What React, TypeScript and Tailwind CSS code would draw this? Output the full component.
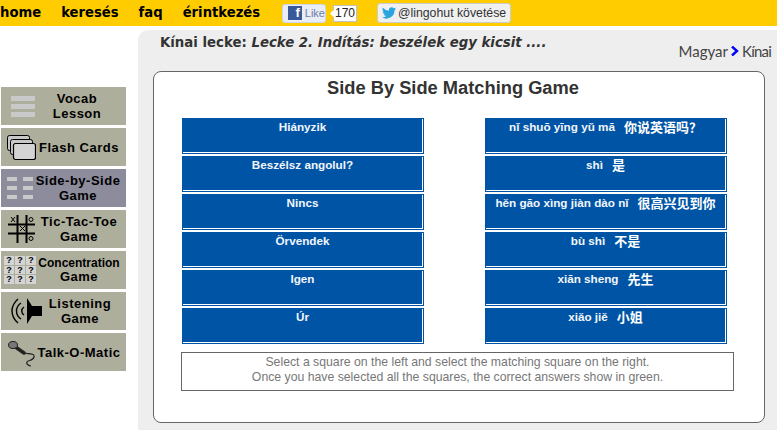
const navLinks = ["home", "keresés", "faq", "érintkezés"]

const leftTiles = ["Hiányzik", "Beszélsz angolul?", "Nincs", "Örvendek", "Igen", "Úr"]

const rightTiles = [
  { pinyin: "nǐ shuō yīng yǔ mā", han: "你说英语吗？" },
  { pinyin: "shì", han: "是" },
  { pinyin: "hěn gāo xìng jiàn dào nǐ", han: "很高兴见到你" },
  { pinyin: "bù shì", han: "不是" },
  { pinyin: "xiān sheng", han: "先生" },
  { pinyin: "xiǎo jiě", han: "小姐" },
]

function VocabIcon() {
  return (
    <div className="flex w-[24px] flex-col gap-[3px]">
      <div className="h-[5px] bg-[#c9c9c9]" />
      <div className="h-[5px] bg-[#c9c9c9]" />
      <div className="h-[5px] bg-[#c9c9c9]" />
    </div>
  )
}

function CardsIcon() {
  return (
    <svg width="30" height="27" viewBox="0 0 30 27">
      <rect x="1.5" y="1.5" width="22" height="15" rx="2" fill="#c8c8c8" stroke="#000" />
      <rect x="4.5" y="5.5" width="22" height="15" rx="2" fill="#c8c8c8" stroke="#000" />
      <rect x="7.5" y="9.5" width="22" height="16" rx="2" fill="#d4d4d4" stroke="#000" strokeWidth="1.2" />
    </svg>
  )
}

function SideBySideIcon() {
  return (
    <div className="grid grid-cols-2 gap-x-[6px] gap-y-[5px]">
      {[0, 1, 2, 3, 4, 5].map((i) => (
        <div key={i} className="h-[4px] w-[10px] bg-[#c9c9c9]" />
      ))}
    </div>
  )
}

function TicTacToeIcon() {
  return (
    <svg width="28" height="28" viewBox="0 0 28 28" stroke="#000" fill="none">
      <path d="M0 9.5H27M0 18.5H27M9.5 0V28M18.5 0V28" strokeWidth="2" />
      <path d="M3 2l4 5M7 2l-4 5M12 11l5 5M17 11l-5 5" strokeWidth="1" />
      <circle cx="23" cy="4.5" r="2" strokeWidth="1" />
      <circle cx="23" cy="23.5" r="2" strokeWidth="1" />
    </svg>
  )
}

function ConcentrationIcon() {
  return (
    <div className="grid grid-cols-3 gap-[1px]">
      {[0, 1, 2, 3, 4, 5, 6, 7, 8].map((i) => (
        <div
          key={i}
          className="flex h-[8.5px] w-[10px] items-center justify-center bg-[#d4d4d4] font-['Liberation_Sans',sans-serif] text-[9px] font-bold leading-none text-black"
        >
          ?
        </div>
      ))}
    </div>
  )
}

function SpeakerIcon() {
  return (
    <svg width="32" height="26" viewBox="0 0 32 26" fill="none" stroke="#000">
      <path d="M16 0L21 8H31V18H21L16 26Z" fill="#000" stroke="none" />
      <path d="M7 1C-1 8-1 18 7 25" strokeWidth="1.4" />
      <path d="M10 5C4 9 4 17 10 21" strokeWidth="1.4" />
      <path d="M13 9C10 11 10 15 13 17" strokeWidth="1.4" />
    </svg>
  )
}

function MicIcon() {
  return (
    <svg width="28" height="30" viewBox="0 0 28 30" fill="none">
      <path d="M7 9L17 16" stroke="#222" strokeWidth="3.5" strokeLinecap="round" />
      <ellipse cx="6" cy="8" rx="4.5" ry="3.5" fill="#777" stroke="#222" />
      <path d="M17 16C21 17 28 16 27 20C26 24 21 23 20 25C19 27 22 29 24 29" stroke="#222" strokeWidth="1.2" />
    </svg>
  )
}

const menu = [
  { lines: ["Vocab", "Lesson"], icon: <VocabIcon />, iconBox: "w-[44px] pl-[10px]", textBox: "w-[64px]" },
  { lines: ["Flash Cards"], icon: <CardsIcon />, iconBox: "w-[38px] pl-[5px]", textBox: "w-[80px]" },
  { lines: ["Side-by-Side", "Game"], icon: <SideBySideIcon />, iconBox: "w-[34px] pl-[6px]", textBox: "w-[86px]", active: true },
  { lines: ["Tic-Tac-Toe", "Game"], icon: <TicTacToeIcon />, iconBox: "w-[38px] pl-[7px]", textBox: "w-[80px]" },
  { lines: ["Concentration", "Game"], icon: <ConcentrationIcon />, iconBox: "w-[37px] pl-[3px]", textBox: "w-[82px]", small: true },
  { lines: ["Listening", "Game"], icon: <SpeakerIcon />, iconBox: "w-[44px] pl-[10px]", textBox: "w-[70px]" },
  { lines: ["Talk-O-Matic"], icon: <MicIcon />, iconBox: "w-[36px] pl-[6px]", textBox: "w-[84px]" },
]

function Tile({ children }: { children: React.ReactNode }) {
  return (
    <div className="h-[36px] w-[242px] border border-[#0054a6] bg-[#0054a6]">
      <div className="flex h-full items-start justify-center border-r border-b border-white font-['Liberation_Sans',sans-serif] text-[11.7px] leading-[15px] font-bold text-[#f2f6fb]">
        {children}
      </div>
    </div>
  )
}

export default function App() {
  return (
    <div className="h-[430px] w-[777px] overflow-hidden bg-white">
      <header className="flex h-[26px] items-center bg-[#ffcc00]">
        <nav className="flex w-[282px] gap-[20px] font-['DejaVu_Sans',sans-serif] text-[13.2px] font-bold text-black">
          {navLinks.map((link) => (
            <a key={link}>{link}</a>
          ))}
        </nav>
        <div className="flex h-[19px] w-[44px] items-center gap-[3px] rounded-[3px] border border-[#cdd7ea] bg-[#e8edf6] pl-[5px] font-['Liberation_Sans',sans-serif] text-[11px] text-[#6d7fa6]">
          <div className="flex h-[14px] w-[14px] items-end justify-end bg-[#3b5998] pr-[2px] text-[13px] leading-[14px] font-bold text-white">
            f
          </div>
          Like
        </div>
        <div className="relative ml-[7px] flex h-[17px] w-[24px] items-center justify-center border border-[#c0c0c0] bg-white font-['Liberation_Sans',sans-serif] text-[12px] text-[#222]">
          <span className="absolute top-[5px] -left-[3px] h-[5px] w-[5px] rotate-45 bg-white" />
          170
        </div>
        <div className="ml-[20px] flex h-[20px] w-[134px] items-center gap-[2px] rounded-[3px] border border-[#ccc] bg-[#f0f0f0] pl-[4px] font-['Liberation_Sans',sans-serif] text-[12.3px] text-[#333]">
          <svg width="14" height="12" viewBox="0 0 24 20" fill="#2ba5e0">
            <path d="M24 2.4a10 10 0 0 1-2.8.8A5 5 0 0 0 23.3.5a10 10 0 0 1-3.1 1.2A4.9 4.9 0 0 0 11.8 6 14 14 0 0 1 1.7.9a4.9 4.9 0 0 0 1.5 6.6 5 5 0 0 1-2.2-.6c0 2.3 1.7 4.4 3.9 4.9a5 5 0 0 1-2.2.1 5 5 0 0 0 4.6 3.4A10 10 0 0 1 0 17.4 14 14 0 0 0 21.5 5.9 10 10 0 0 0 24 2.4Z" />
          </svg>
          @lingohut követése
        </div>
      </header>

      <div className="flex pt-[4px]">
        <aside className="flex w-[138px] flex-col gap-[3px] pt-[57px] pl-[1px]">
          {menu.map((item) => (
            <div
              key={item.lines[0]}
              className={`flex h-[38px] w-[125px] items-center ${item.active ? "bg-[#8c8c9c]" : "bg-[#aeae9c]"}`}
            >
              <div className={`flex shrink-0 items-center ${item.iconBox}`}>{item.icon}</div>
              <div
                className={`text-center font-['Liberation_Sans',sans-serif] font-bold text-black ${item.textBox} ${
                  item.small ? "text-[12px] leading-[14px]" : "text-[13px] leading-[15px] tracking-[0.5px]"
                }`}
              >
                {item.lines.map((line) => (
                  <div key={line} className={`whitespace-nowrap ${line === "Game" ? "text-[13px] tracking-[0.5px]" : ""}`}>
                    {line}
                  </div>
                ))}
              </div>
            </div>
          ))}
        </aside>

        <main className="h-[400px] w-[639px] rounded-tl-[10px] bg-[#eeeeee] pl-[15px]">
          <div className="flex h-[41px] items-start">
            <h1 className="pl-[7px] font-['DejaVu_Sans',sans-serif] text-[13.3px] leading-[26px] font-bold text-[#333]">
              Kínai lecke: <em>Lecke 2. Indítás: beszélek egy kicsit ....</em>
            </h1>
            <div className="ml-auto flex items-center gap-[3px] pt-[12px] pr-[6px] font-['Lato',sans-serif] text-[15px] leading-[18px] text-[#444]">
              Magyar
              <svg width="8" height="10" viewBox="0 0 8 10" fill="none" stroke="#0000ff" strokeWidth="2.4">
                <path d="M1 0.5L6 5L1 9.5" />
              </svg>
              <span className="tracking-[-0.8px]">Kínai</span>
            </div>
          </div>

          <section className="h-[352px] w-[612px] rounded-[8px] border border-[#666] bg-white pl-[28px]">
            <h2 className="pt-[5px] pr-[40px] text-center font-['Liberation_Sans',sans-serif] text-[18.3px] leading-[21px] font-bold text-[#333]">
              Side By Side Matching Game
            </h2>
            <div className="flex gap-[61px] pt-[20px]">
              <div className="flex flex-col gap-[2px]">
                {leftTiles.map((tile) => (
                  <Tile key={tile}>{tile}</Tile>
                ))}
              </div>
              <div className="flex flex-col gap-[2px]">
                {rightTiles.map((tile) => (
                  <Tile key={tile.pinyin}>
                    <span>{tile.pinyin}</span>
                    <span className="ml-[9px] font-['Noto_Sans_CJK_SC',sans-serif] text-[13px] text-white">{tile.han}</span>
                  </Tile>
                ))}
              </div>
            </div>
            <div className="mt-[8px] -ml-[1px] h-[39px] w-[553px] border border-[#666] pt-[2px] text-center font-['Liberation_Sans',sans-serif] text-[12.25px] leading-[15px] text-[#777]">
              <p>Select a square on the left and select the matching square on the right.</p>
              <p>Once you have selected all the squares, the correct answers show in green.</p>
            </div>
          </section>
        </main>
      </div>
    </div>
  )
}
